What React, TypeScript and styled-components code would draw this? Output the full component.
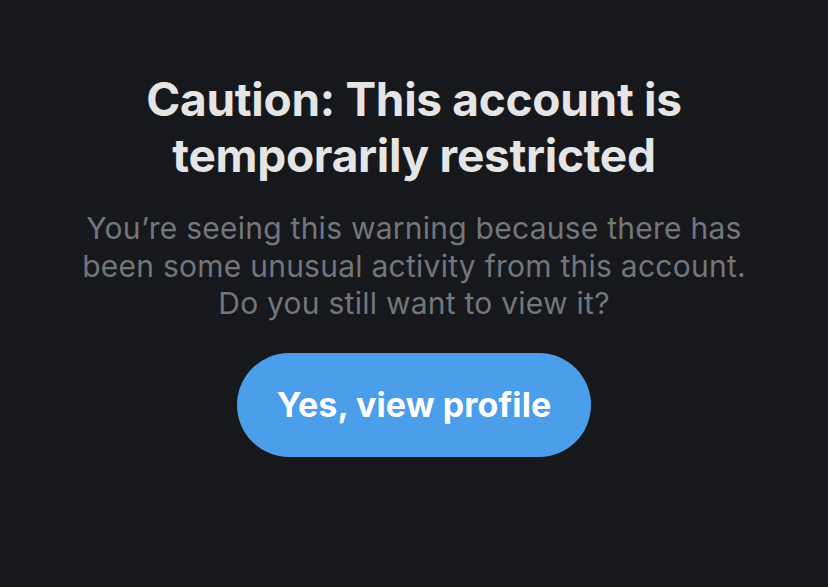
import React from "react";
import styled, { createGlobalStyle } from "styled-components";

const Global = createGlobalStyle`
  html, body { margin: 0; padding: 0; background: #17181c; }
  body { font-family: Inter, "Noto Sans", sans-serif; -webkit-font-smoothing: antialiased; }
`;

const Page = styled.main`
  width: 828px;
  height: 587px;
  background: #17181c;
  display: flex;
  flex-direction: column;
  align-items: center;
  padding-top: 71px;
  box-sizing: border-box;
`;

const Title = styled.h1`
  margin: 0;
  font-size: 46px;
  line-height: 56px;
  font-weight: 700;
  color: #e5e5e5;
  text-align: center;
  letter-spacing: -0.3px;
  white-space: nowrap;
`;

const Body = styled.p`
  margin: 27px 0 0;
  font-size: 30px;
  line-height: 37.5px;
  font-weight: 400;
  color: #73767b;
  text-align: center;
  letter-spacing: 0.25px;
  white-space: nowrap;
`;

const Button = styled.button`
  margin-top: 30px;
  width: 354px;
  height: 104px;
  border: none;
  border-radius: 52px;
  background: #4b9eea;
  color: #ffffff;
  font-family: Inter, "Noto Sans", sans-serif;
  font-size: 34px;
  font-weight: 700;
  letter-spacing: 0.1px;
  cursor: pointer;
`;

export default function App() {
  return (
    <>
      <Global />
      <Page>
        <Title>
          Caution: This account is
          <br />
          temporarily restricted
        </Title>
        <Body>
          You’re seeing this warning because there has
          <br />
          been some unusual activity from this account.
          <br />
          Do you still want to view it?
        </Body>
        <Button>Yes, view profile</Button>
      </Page>
    </>
  );
}
